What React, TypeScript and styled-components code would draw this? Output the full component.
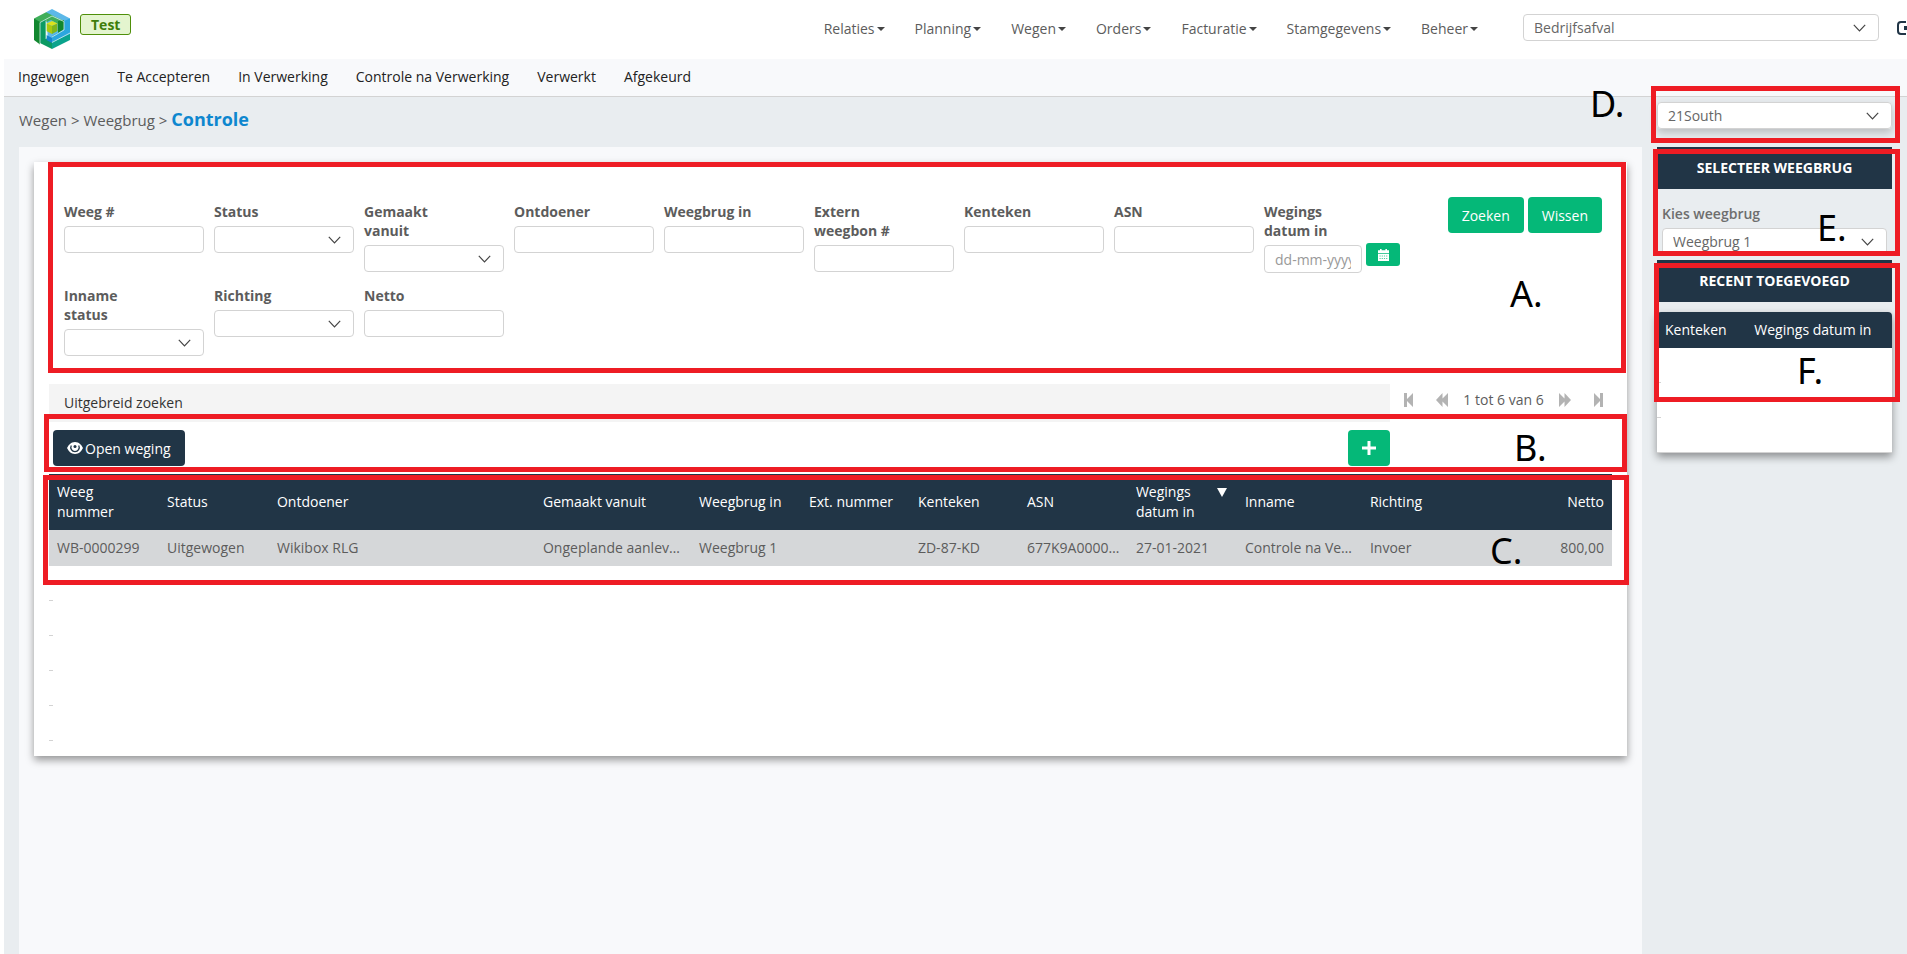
import React from "react";
import styled, { createGlobalStyle, css } from "styled-components";

const Global = createGlobalStyle`
  *, *::before, *::after { box-sizing: border-box; }
  html, body { margin: 0; background: #fff; overflow: hidden; }
  body, button, input, select { font-family: "Open Sans", "Noto Sans", sans-serif; font-size: 14px; }
  body { color: #5c5c5c; line-height: 20px; }
`;

const navy = "#213546";
const green = "#05b878";
const line = "#d3d3d3";
const red = "#ee1c24";

const Page = styled.div`
  position: relative;
  display: flex;
  flex-direction: column;
  min-height: 100vh;
  padding-left: 4px;
  overflow: hidden;
`;

const TopBar = styled.header`
  display: flex;
  align-items: flex-start;
  height: 59px;
  padding-left: 30px;
`;

const Logo = styled.svg`
  width: 36px;
  height: 40px;
  margin-top: 9px;
`;

const EnvBadge = styled.span`
  margin: 14px 0 0 10px;
  padding: 0 10px;
  border: 1px solid #4f8f0a;
  border-radius: 3px;
  background: #e4f5cf;
  color: #3f7d0a;
  font-weight: 700;
  line-height: 19px;
`;

const MainNav = styled.nav`
  display: flex;
  gap: 30px;
  margin: 19px 45px 0 auto;
`;

const NavLink = styled.a`
  display: flex;
  align-items: center;
  gap: 2px;
  color: #5c5c5c;
  text-decoration: none;

  &::after {
    content: "";
    border: 4px solid transparent;
    border-top-color: #444;
    border-bottom: 0;
  }
`;

const SubNav = styled.nav`
  display: flex;
  align-items: center;
  gap: 28px;
  height: 38px;
  padding: 0 14px 2px;
  border-bottom: 1px solid ${line};
  background: #f8f9fb;
`;

const SubLink = styled.a`
  color: #222;
  text-decoration: none;
`;

const boxed = css`
  display: block;
  width: 100%;
  height: 27px;
  border: 1px solid ${line};
  border-radius: 4px;
  background: #fff;
  color: #666;
  outline: 0;
`;

const TextBox = styled.input`
  ${boxed}
  padding: 0 10px;
  &::placeholder { color: #999; opacity: 1; }
`;

const SelectWrap = styled.div<{ $raised?: boolean }>`
  position: relative;
  border-radius: 4px;
  box-shadow: ${(p) => (p.$raised ? "0 4px 8px rgba(0,0,0,.2)" : "none")};
`;

const NativeSelect = styled.select`
  ${boxed}
  appearance: none;
  padding: 0 30px 0 10px;
`;

const Chevron = styled.svg`
  position: absolute;
  right: 13px;
  top: 10px;
  width: 13px;
  height: 8px;
  pointer-events: none;
`;

const CompanyPicker = styled.div`
  width: 356px;
  margin-top: 14px;
`;

const LogoutButton = styled.button`
  width: 10px;
  height: 16px;
  margin: 20px 0 0 18px;
  padding: 0;
  border: 0;
  background: none;
  overflow: hidden;
`;

const Body = styled.div`
  flex: 1;
  display: flex;
  padding: 0 15px;
  background: #e9edf0;
`;

const Main = styled.main`
  flex: 1;
  min-width: 0;
  display: flex;
  flex-direction: column;
`;

const Crumbs = styled.div`
  height: 50px;
  padding-top: 12px;
  font-size: 15px;
  a { color: inherit; text-decoration: none; }
  strong { color: #0e87cf; font-size: 18px; }
`;

const Well = styled.div`
  flex: 1;
  padding: 15px;
  background: #f8f9fb;
`;

const Card = styled.section`
  padding: 35px 15px 15px;
  background: #fff;
  box-shadow: 0 4px 8px rgba(0, 0, 0, 0.4);
`;

const Filter = styled.form`
  display: flex;
  justify-content: space-between;
  padding: 0 10px 28px 15px;
`;

const FieldGrid = styled.div`
  flex: 1;
  display: grid;
  grid-template-columns: repeat(auto-fill, 140px);
  gap: 13px 10px;
  padding-top: 5px;
`;

const Field = styled.div`
  min-height: 65px;
  label {
    display: block;
    width: 100px;
    margin-bottom: 5px;
    font-weight: 700;
    line-height: 19px;
  }
`;

const DateRow = styled.div`
  display: flex;
  gap: 4px;
  ${TextBox} { width: 98px; height: 28px; }
`;

const CalendarButton = styled.button`
  width: 34px;
  height: 23px;
  margin-top: -2px;
  padding: 0;
  border: 0;
  border-radius: 3px;
  background: ${green};
  flex: none;
  svg { display: block; margin: 0 auto; }
`;

const Actions = styled.div`
  display: flex;
  align-items: flex-start;
  gap: 4px;
`;

const Button = styled.button<{ $dark?: boolean }>`
  display: flex;
  align-items: center;
  gap: 2px;
  height: 36px;
  padding: 0 14px;
  border: 0;
  border-radius: 4px;
  background: ${(p) => (p.$dark ? navy : green)};
  color: #fff;
`;

const StatusRow = styled.div`
  display: flex;
  align-items: flex-start;
  height: 46px;
`;

const Advanced = styled.a`
  flex: 1;
  height: 38px;
  padding: 9px 15px;
  background: #f4f4f4;
  color: #333;
  text-decoration: none;
`;

const Pager = styled.div`
  display: flex;
  align-items: center;
  justify-content: space-between;
  width: 222px;
  padding: 6px 9px 0 14px;
`;

const PagerGroup = styled.span`
  display: flex;
  align-items: center;
  gap: 15px;
`;

const PagerButton = styled.button`
  display: flex;
  padding: 0;
  border: 0;
  background: none;
  color: #b3b3b3;
`;

const Toolbar = styled.div`
  display: flex;
  justify-content: space-between;
  height: 44px;
  padding: 0 222px 0 4px;
`;

const Table = styled.table<{ $tallHead?: boolean }>`
  width: 100%;
  border-collapse: collapse;
  table-layout: fixed;
  text-align: left;

  th {
    height: ${(p) => (p.$tallHead ? "56px" : "36px")};
    padding: 0 8px;
    background: ${navy};
    color: #fff;
    font-weight: 400;
  }
  td {
    height: 36px;
    padding: 0 8px;
    overflow: hidden;
    background: #d5d7d9;
    text-overflow: ellipsis;
    white-space: nowrap;
  }
`;

const HeadCell = styled.th<{ $end?: boolean }>`
  text-align: ${(p) => (p.$end ? "right" : "left")};
`;

const BodyCell = styled.td<{ $end?: boolean }>`
  text-align: ${(p) => (p.$end ? "right" : "left")};
`;

const SortedHead = styled.span`
  display: flex;
  justify-content: space-between;
  gap: 10px;
  svg { flex: none; margin: 6px 2px 0 0; }
`;

const EmptyRow = styled.div`
  height: 35px;
  padding-top: 34px;
  &::after {
    content: "";
    display: block;
    width: 4px;
    height: 1px;
    background: ${line};
  }
`;

const Side = styled.aside`
  width: 235px;
  margin-left: 15px;
  padding-top: 5px;
`;

const SideTop = styled.div`
  height: 45px;
`;

const SideTitle = styled.h2`
  height: 42px;
  margin: 0;
  background: ${navy};
  color: #fff;
  font-size: 14px;
  font-weight: 700;
  line-height: 42px;
  text-align: center;
  text-transform: uppercase;
`;

const SideForm = styled.div`
  height: 65px;
  margin-bottom: 6px;
  padding: 15px 5px 0;
  overflow: hidden;
  label { display: block; margin-bottom: 4px; font-weight: 600; color: #6e6e6e; }
`;

const Recent = styled.div`
  padding-bottom: 34px;
  border-bottom: 1px solid ${line};
  border-radius: 4px 4px 0 0;
  overflow: hidden;
  background: #fff;
`;

const RecentShadow = styled.div`
  margin-top: 10px;
  border-radius: 4px 4px 0 0;
  box-shadow: 0 4px 8px rgba(0, 0, 0, 0.4);
`;

const Callout = styled.div<{ $x: number; $y: number; $w: number; $h: number }>`
  position: absolute;
  left: ${(p) => p.$x}px;
  top: ${(p) => p.$y}px;
  width: ${(p) => p.$w}px;
  height: ${(p) => p.$h}px;
  border: 5px solid ${red};
  pointer-events: none;
`;

const CalloutLetter = styled.span<{ $x: number; $y: number }>`
  position: absolute;
  left: ${(p) => p.$x}px;
  top: ${(p) => p.$y}px;
  color: #000;
  font-family: "Noto Sans", "Open Sans", sans-serif;
  font-size: 36px;
  line-height: 40px;
  pointer-events: none;
`;

const mainLinks = ["Relaties", "Planning", "Wegen", "Orders", "Facturatie", "Stamgegevens", "Beheer"];
const subLinks = ["Ingewogen", "Te Accepteren", "In Verwerking", "Controle na Verwerking", "Verwerkt", "Afgekeurd"];

type FieldSpec = { label: string; kind: "text" | "select" | "date" };
const fields: FieldSpec[] = [
  { label: "Weeg #", kind: "text" },
  { label: "Status", kind: "select" },
  { label: "Gemaakt vanuit", kind: "select" },
  { label: "Ontdoener", kind: "text" },
  { label: "Weegbrug in", kind: "text" },
  { label: "Extern weegbon #", kind: "text" },
  { label: "Kenteken", kind: "text" },
  { label: "ASN", kind: "text" },
  { label: "Wegings datum in", kind: "date" },
  { label: "Inname status", kind: "select" },
  { label: "Richting", kind: "select" },
  { label: "Netto", kind: "text" },
];

const columns = [
  { head: "Weeg nummer", width: 110, value: "WB-0000299" },
  { head: "Status", width: 110, value: "Uitgewogen" },
  { head: "Ontdoener", width: 266, value: "Wikibox RLG" },
  { head: "Gemaakt vanuit", width: 156, value: "Ongeplande aanlevering" },
  { head: "Weegbrug in", width: 110, value: "Weegbrug 1" },
  { head: "Ext. nummer", width: 109, value: "" },
  { head: "Kenteken", width: 109, value: "ZD-87-KD" },
  { head: "ASN", width: 109, value: "677K9A000012" },
  { head: "Wegings datum in", width: 109, value: "27-01-2021", sorted: true },
  { head: "Inname", width: 125, value: "Controle na Verwerking" },
  { head: "Richting", width: 125, value: "Invoer" },
  { head: "Netto", width: 125, value: "800,00", end: true },
];
const totalWidth = columns.reduce((sum, c) => sum + c.width, 0);

const callouts = [
  { letter: "A.", box: [48, 162, 1578, 211], at: [1510, 274] },
  { letter: "B.", box: [44, 414, 1583, 58], at: [1514, 428] },
  { letter: "C.", box: [43, 475, 1586, 110], at: [1490, 531] },
  { letter: "D.", box: [1651, 86, 249, 57], at: [1590, 84] },
  { letter: "E.", box: [1653, 149, 247, 107], at: [1817, 208] },
  { letter: "F.", box: [1654, 263, 246, 139], at: [1797, 351] },
];

function Dropdown({ id, options, raised, label }: { id?: string; options: string[]; raised?: boolean; label?: string }) {
  return (
    <SelectWrap $raised={raised}>
      <NativeSelect id={id} aria-label={label}>
        {options.map((o) => <option key={o}>{o}</option>)}
      </NativeSelect>
      <Chevron viewBox="0 0 13 8" fill="none" stroke="#444" strokeWidth="1.2">
        <path d="M0.8 0.8 6.5 6.8 12.2 0.8" />
      </Chevron>
    </SelectWrap>
  );
}

function FilterField({ label, kind }: FieldSpec) {
  const id = "f-" + label.toLowerCase().replace(/[^a-z]+/g, "-");
  return (
    <Field>
      <label htmlFor={id}>{label}</label>
      {kind === "text" && <TextBox id={id} />}
      {kind === "select" && <Dropdown id={id} options={[""]} />}
      {kind === "date" && (
        <DateRow>
          <TextBox id={id} placeholder="dd-mm-yyyy" />
          <CalendarButton type="button" aria-label="Kies datum">
            <svg width="11" height="12" viewBox="0 0 11 12">
              <path fill="#fff" d="M2 0h1.6v1.3h3.8V0H9v1.3h2V4H0V1.3h2zM0 4.8h11V12H0z" />
              <path stroke={green} strokeWidth=".7" strokeDasharray="1.2 1" d="M1.5 7h8M1.5 9.5h8" />
            </svg>
          </CalendarButton>
        </DateRow>
      )}
    </Field>
  );
}

function BrandMark() {
  return (
    <Logo viewBox="0 0 36 40" role="img" aria-label="Logo">
      <path fill="#5cb8e8" d="M12 3.2 18 0l18 9.5V26L18 36l-4-4z" />
      <path fill="#2ba6de" d="M36 9.5V26L18 36v-9l12-7v-8z" />
      <path fill="#3fae5a" d="M0 9.5 12 3.2 30 12v9l-6-3v-3L17 11 6 16.5z" />
      <path fill="#12872f" d="M0 9.5 6 13v22.5L0 31z" />
      <path fill="#0b9a63" d="M6 13l6-3v19l6 4v7L6 34z" />
      <path fill="#12872f" d="M24 12l6-1v9l-6 4z" />
      <path fill="#1583cf" d="M12.5 26 18 29v5l-5.5-3z" />
      <path fill="#0aa38c" d="M18 33.5 36 25v6L18 40z" />
      <path fill="#dbe21c" d="M12.5 14.5 18 12l5.5 2.5L18 17z" />
      <path fill="#aac80f" d="M12.5 14.5 18 17v8l-5.5-3z" />
      <path fill="#7fb51c" d="M23.5 14.5 18 17v8l5.5-3z" />
      <path fill="none" stroke="#d6efe6" strokeWidth=".8" d="M6 35V13.5L18 7l12 5.5V21l-12 7M12 30V11.5M18 33.5 36 24" />
    </Logo>
  );
}

const pagerPaths = {
  first: "M0 0h3v6L9 0v14L3 8v6H0z",
  back: "M6.5 0v5.5L12 0v14L6.5 8.5V14L0 7z",
  forward: "M0 0l5.5 5.5V0L12 7l-6.5 7V8.5L0 14z",
  last: "M0 0l6 6V0h3v14H6V8L0 14z",
};

function PagerIcon({ kind, label }: { kind: keyof typeof pagerPaths; label: string }) {
  const w = kind === "first" || kind === "last" ? 9 : 12;
  return (
    <PagerButton type="button" aria-label={label}>
      <svg width={w} height="14" viewBox={`0 0 ${w} 14`}><path fill="currentColor" d={pagerPaths[kind]} /></svg>
    </PagerButton>
  );
}

export default function App() {
  return (
    <>
      <Global />
      <Page>
        <TopBar>
          <BrandMark />
          <EnvBadge>Test</EnvBadge>
          <MainNav>{mainLinks.map((l) => <NavLink href="#" key={l}>{l}</NavLink>)}</MainNav>
          <CompanyPicker><Dropdown label="Bedrijf" options={["Bedrijfsafval"]} /></CompanyPicker>
          <LogoutButton type="button" aria-label="Uitloggen">
            <svg width="16" height="14" viewBox="0 0 16 14" fill="none" stroke={navy} strokeWidth="2">
              <path d="M9 1H4a3 3 0 0 0-3 3v6a3 3 0 0 0 3 3h5" />
              <path fill={navy} stroke="none" d="M7 5h4V2l5 5-5 5V9H7z" />
            </svg>
          </LogoutButton>
        </TopBar>
        <SubNav>{subLinks.map((l) => <SubLink href="#" key={l}>{l}</SubLink>)}</SubNav>
        <Body>
          <Main>
            <Crumbs><a href="#">Wegen</a> &gt; <a href="#">Weegbrug</a> &gt; <strong>Controle</strong></Crumbs>
            <Well>
              <Card>
                <Filter>
                  <FieldGrid>{fields.map((f) => <FilterField key={f.label} {...f} />)}</FieldGrid>
                  <Actions>
                    <Button type="button">Zoeken</Button>
                    <Button type="button">Wissen</Button>
                  </Actions>
                </Filter>
                <StatusRow>
                  <Advanced href="#">Uitgebreid zoeken</Advanced>
                  <Pager>
                    <PagerIcon kind="first" label="Eerste" />
                    <PagerGroup>
                      <PagerIcon kind="back" label="Vorige" />
                      1 tot 6 van 6
                      <PagerIcon kind="forward" label="Volgende" />
                    </PagerGroup>
                    <PagerIcon kind="last" label="Laatste" />
                  </Pager>
                </StatusRow>
                <Toolbar>
                  <Button $dark type="button">
                    <svg width="16" height="12" viewBox="0 0 16 12">
                      <path fill="#fff" d="M8 0c4 0 6.5 3 8 6-1.5 3-4 6-8 6S1.5 9 0 6c1.5-3 4-6 8-6z" />
                      <path fill="none" stroke={navy} strokeWidth="1.3" d="M4.3 3.5a4.2 4.2 0 1 0 7.4 0" />
                      <circle cx="8" cy="4.5" r="1.5" fill={navy} />
                    </svg>
                    Open weging
                  </Button>
                  <Button type="button" aria-label="Toevoegen">
                    <svg width="14" height="14" viewBox="0 0 14 14"><path stroke="#fff" strokeWidth="3" d="M7 0v14M0 7h14" /></svg>
                  </Button>
                </Toolbar>
                <Table $tallHead>
                  <colgroup>
                    {columns.map((c) => <col key={c.head} style={{ width: `${(c.width / totalWidth) * 100}%` }} />)}
                  </colgroup>
                  <thead>
                    <tr>
                      {columns.map((c) => (
                        <HeadCell key={c.head} $end={c.end}>
                          {c.sorted ? (
                            <SortedHead>
                              {c.head}
                              <svg width="10" height="9" viewBox="0 0 10 9"><path fill="#fff" d="M0 0h10L5 9z" /></svg>
                            </SortedHead>
                          ) : c.head}
                        </HeadCell>
                      ))}
                    </tr>
                  </thead>
                  <tbody>
                    <tr>{columns.map((c) => <BodyCell key={c.head} $end={c.end}>{c.value}</BodyCell>)}</tr>
                  </tbody>
                </Table>
                {[1, 2, 3, 4, 5].map((n) => <EmptyRow key={n} />)}
              </Card>
            </Well>
          </Main>
          <Side>
            <SideTop><Dropdown raised label="Vestiging" options={["21South"]} /></SideTop>
            <SideTitle>Selecteer weegbrug</SideTitle>
            <SideForm>
              <label htmlFor="bridge">Kies weegbrug</label>
              <Dropdown id="bridge" options={["Weegbrug 1"]} />
            </SideForm>
            <SideTitle>Recent toegevoegd</SideTitle>
            <RecentShadow>
              <Recent>
                <Table>
                  <colgroup><col style={{ width: "38%" }} /><col /></colgroup>
                  <thead><tr><th>Kenteken</th><th>Wegings datum in</th></tr></thead>
                </Table>
                <EmptyRow />
                <EmptyRow />
              </Recent>
            </RecentShadow>
          </Side>
        </Body>
        {callouts.map((c) => (
          <React.Fragment key={c.letter}>
            <Callout $x={c.box[0]} $y={c.box[1]} $w={c.box[2]} $h={c.box[3]} />
            <CalloutLetter $x={c.at[0]} $y={c.at[1]}>{c.letter}</CalloutLetter>
          </React.Fragment>
        ))}
      </Page>
    </>
  );
}
